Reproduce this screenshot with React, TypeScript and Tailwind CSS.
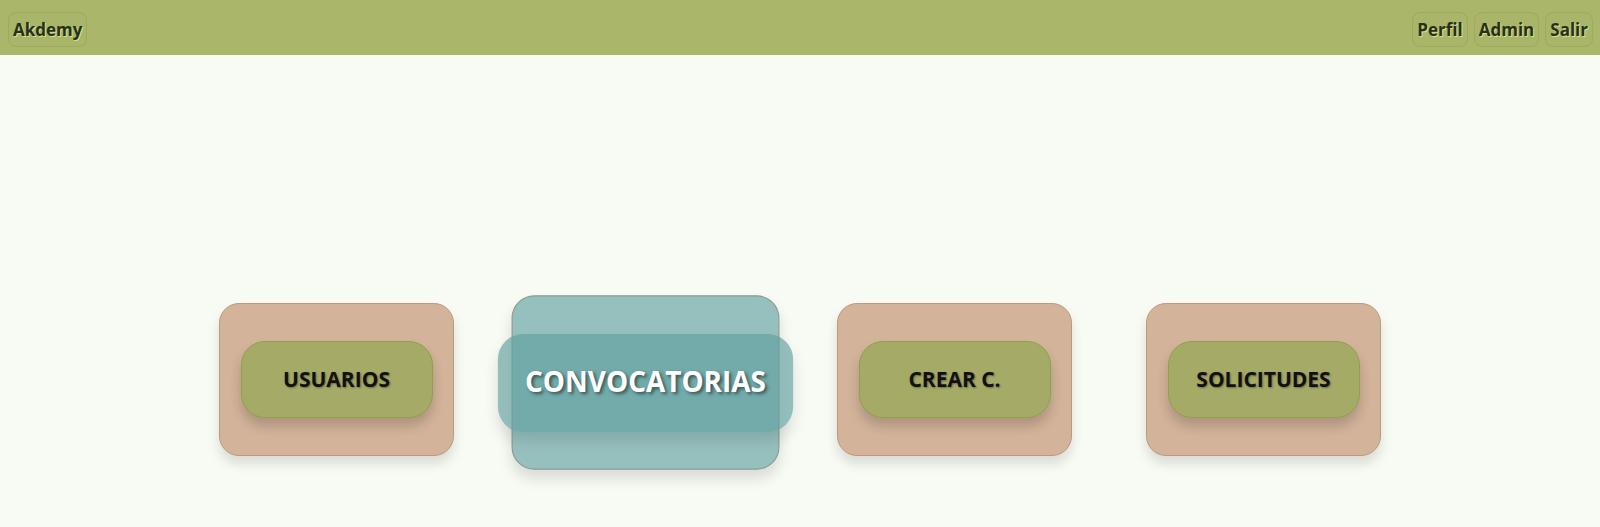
import React from "react";

const font = { fontFamily: '"Open Sans", "Noto Sans", "Liberation Sans", sans-serif' };

function NavBtn({ label }: { label: string }) {
  return (
    <button className="h-[35px] px-[4px] rounded-[8px] border border-[#9dab5f] bg-[#a9b669] text-[17px] font-bold text-[#27301a] [text-shadow:1px_1px_0_#d6e08c] leading-none">
      {label}
    </button>
  );
}

function Card({ label }: { label: string }) {
  return (
    <div className="w-[235px] h-[153px] rounded-[20px] border border-[#bb9a7f] bg-[#d3b39a] flex items-center justify-center shadow-[0_8px_12px_rgba(0,0,0,0.12)]">
      <div className="w-[192px] h-[77px] rounded-[24px] border border-[#8fa14b] bg-[#a5aa67] flex items-center justify-center shadow-[0_8px_12px_rgba(0,0,0,0.18)]">
        <span className="text-[21px] font-bold text-[#111] [text-shadow:1px_1px_2px_rgba(0,0,0,0.35)]">{label}</span>
      </div>
    </div>
  );
}

function ActiveCard({ label }: { label: string }) {
  return (
    <div className="w-[235px] h-[153px] scale-[1.14] translate-y-[3px] rounded-[20px] border border-[#8c9d8e] bg-[#96c0be] flex items-center justify-center shadow-[0_8px_12px_rgba(0,0,0,0.12)]">
      <div className="w-[259px] h-[86px] shrink-0 rounded-[22px] bg-[rgba(96,159,160,0.66)] flex items-center justify-center shadow-[0_8px_12px_rgba(0,0,0,0.1)]">
        <span className="text-[24.5px] font-bold text-white [text-shadow:2px_2px_3px_rgba(0,0,0,0.5)]">{label}</span>
      </div>
    </div>
  );
}

export default function App() {
  return (
    <div style={font} className="w-full min-h-[527px] bg-[#f8fbf3]">
      <header className="h-[55px] bg-[#aab76a] flex justify-between items-start pt-[12px] pl-[8px] pr-[7px]">
        <NavBtn label="Akdemy" />
        <div className="flex gap-[6px]">
          <NavBtn label="Perfil" />
          <NavBtn label="Admin" />
          <NavBtn label="Salir" />
        </div>
      </header>
      <main className="flex justify-center gap-[74px] pt-[248px]">
        <Card label="USUARIOS" />
        <ActiveCard label="CONVOCATORIAS" />
        <Card label="CREAR C." />
        <Card label="SOLICITUDES" />
      </main>
    </div>
  );
}
